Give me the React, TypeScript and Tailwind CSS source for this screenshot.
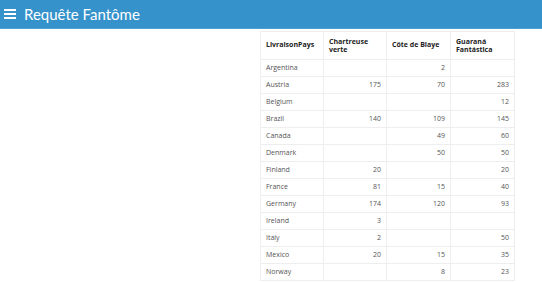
const rows: [string, string, string, string][] = [
  ['Argentina', '', '2', ''],
  ['Austria', '175', '70', '283'],
  ['Belgium', '', '', '12'],
  ['Brazil', '140', '109', '145'],
  ['Canada', '', '49', '60'],
  ['Denmark', '', '50', '50'],
  ['Finland', '20', '', '20'],
  ['France', '81', '15', '40'],
  ['Germany', '174', '120', '93'],
  ['Ireland', '3', '', ''],
  ['Italy', '2', '', '50'],
  ['Mexico', '20', '15', '35'],
  ['Norway', '', '8', '23'],
];

export default function App() {
  return (
    <div className="w-[542px] h-[282px] overflow-hidden bg-white font-['Open_Sans',sans-serif]">
      <header className="h-[29px] bg-[#3692cb] border-b border-[#4a9fd3] flex items-center pl-1 gap-[8px] text-white">
        <svg width="12" height="10" viewBox="0 0 12 10">
          <rect x="0" y="0" width="12" height="2" fill="white" />
          <rect x="0" y="4" width="12" height="2" fill="white" />
          <rect x="0" y="8" width="12" height="2" fill="white" />
        </svg>
        <span className="text-[15px] leading-none font-['Lato',sans-serif]">Requête Fantôme</span>
      </header>
      <div className="flex pl-[260px] pt-[2px]">
        <table className="border-collapse text-[7px] text-[#555] table-fixed w-[254px]">
          <thead>
            <tr className="h-[28px]">
              <th className="w-[63px] border border-[#eee] px-[5px] text-left font-bold text-[#222]">LivraisonPays</th>
              <th className="w-[63px] border border-[#eee] px-[5px] text-left font-bold text-[#222] leading-[8px]">Chartreuse verte</th>
              <th className="w-[64px] border border-[#eee] px-[5px] text-left font-bold text-[#222]">Côte de Blaye</th>
              <th className="w-[64px] border border-[#eee] px-[5px] text-left font-bold text-[#222] leading-[8px]">Guaraná Fantástica</th>
            </tr>
          </thead>
          <tbody>
            {rows.map(r => (
              <tr key={r[0]} className="h-[17px]">
                <td className="border border-[#eee] px-[5px]">{r[0]}</td>
                <td className="border border-[#eee] px-[5px] text-right">{r[1]}</td>
                <td className="border border-[#eee] px-[5px] text-right">{r[2]}</td>
                <td className="border border-[#eee] px-[5px] text-right">{r[3]}</td>
              </tr>
            ))}
          </tbody>
        </table>
      </div>
    </div>
  );
}
